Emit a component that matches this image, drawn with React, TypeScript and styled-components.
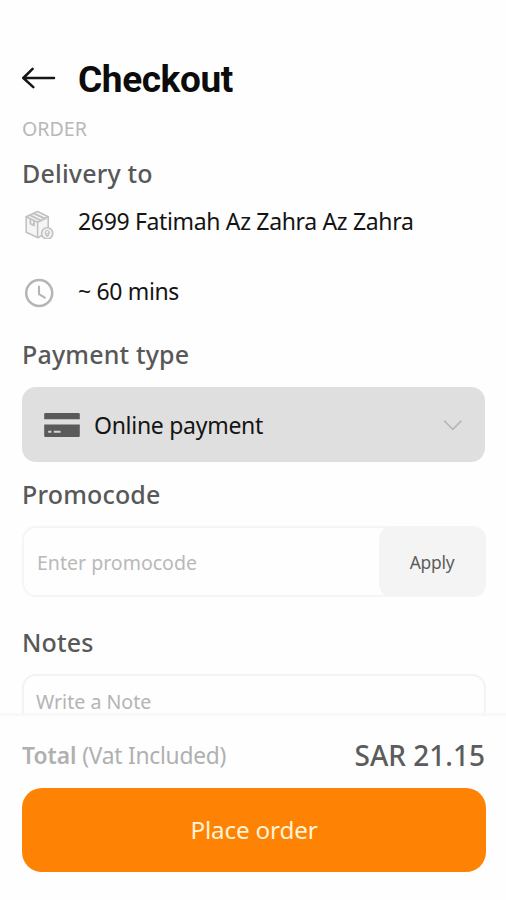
import React from 'react';
import styled, { createGlobalStyle } from 'styled-components';

const GlobalStyle = createGlobalStyle`
  * { box-sizing: border-box; }
  body {
    margin: 0;
    background: #fefefe;
    font-family: "Noto Sans", sans-serif;
  }
  button, input, textarea { font-family: inherit; margin: 0; }
`;

const Screen = styled.div`
  height: 900px;
  display: flex;
  flex-direction: column;
  overflow: hidden;
  background: #fefefe;
`;

const Content = styled.main`
  flex: 1;
  min-height: 0;
  padding: 60px 21px 0 22px;
  overflow: hidden;
`;

const Header = styled.header`
  display: flex;
  align-items: center;
  height: 40px;
`;

const BackButton = styled.button`
  display: flex;
  width: 56px;
  height: 40px;
  padding: 0;
  border: 0;
  background: none;
`;

const Title = styled.h1`
  margin: 0;
  font: 700 37px/40px Roboto, sans-serif;
  letter-spacing: -0.4px;
  color: #0c0c0c;
`;

const Overline = styled.div`
  margin-top: 14px;
  height: 30px;
  font-size: 19.6px;
  line-height: 30px;
  color: #b8b8b8;
`;

const Heading = styled.h2<{ $gap: number }>`
  margin: ${(p) => p.$gap}px 0 0;
  height: 34px;
  font-size: 25px;
  font-weight: 500;
  line-height: 34px;
  letter-spacing: 0.18px;
  color: #585858;
`;

const DetailRow = styled.div<{ $gap: number }>`
  display: grid;
  grid-template-columns: 56px 1fr;
  align-items: center;
  height: 36px;
  margin-top: ${(p) => p.$gap}px;
`;

const DetailText = styled.span`
  font-size: 23px;
  line-height: 36px;
  letter-spacing: -0.34px;
  color: #141414;
  white-space: nowrap;
`;

const PaymentSelect = styled.button`
  display: flex;
  align-items: center;
  width: 463px;
  height: 75px;
  margin-top: 16px;
  padding: 0 21px;
  border: 0;
  border-radius: 14px;
  background: #dfdfdf;
`;

const PaymentLabel = styled.span`
  flex: 1;
  margin-left: 13px;
  font-size: 23px;
  line-height: 32px;
  letter-spacing: -0.28px;
  text-align: left;
  color: #141414;
`;

const PromoField = styled.div`
  display: flex;
  width: 464px;
  height: 71px;
  margin-top: 15px;
  border: 2px solid #f5f5f5;
  border-right: 0;
  border-radius: 14px;
`;

const PromoInput = styled.input`
  flex: 1;
  min-width: 0;
  padding: 1px 0 0 13px;
  border: 0;
  outline: 0;
  background: transparent;
  font-size: 19.55px;
  color: #333;
  &::placeholder { color: #b9b9b9; opacity: 1; }
`;

const ApplyButton = styled.button`
  width: 107px;
  height: 71px;
  margin-top: -2px;
  padding: 0 1px 0 0;
  border: 0;
  border-radius: 13px;
  background: #f4f4f4;
  font-size: 17.4px;
  letter-spacing: -0.25px;
  color: #5c5c5c;
`;

const NoteInput = styled.textarea`
  display: block;
  width: 464px;
  height: 110px;
  margin-top: 15px;
  padding: 12px;
  border: 2px solid #f3f3f3;
  border-radius: 14px;
  outline: 0;
  resize: none;
  background: transparent;
  font-size: 19.6px;
  line-height: 27px;
  &::placeholder { color: #b4b4b4; opacity: 1; }
`;

const Footer = styled.footer`
  flex: none;
  height: 187px;
  padding: 24px 21px 0 22px;
  border-top: 3px solid #f8f8f8;
  background: #fefefe;
`;

const TotalRow = styled.div`
  display: flex;
  justify-content: space-between;
  height: 34px;
  margin-bottom: 14px;
`;

const TotalLabel = styled.span`
  font-size: 22.8px;
  line-height: 31px;
  letter-spacing: -0.25px;
  color: #b0b0b0;
  white-space: nowrap;
`;

const TotalWord = styled.strong`
  font-weight: 600;
  letter-spacing: 0;
`;

const TotalAmount = styled.span`
  font-size: 28px;
  font-weight: 500;
  line-height: 30px;
  color: #5c5c5c;
`;

const PlaceOrder = styled.button`
  display: block;
  width: 464px;
  height: 84px;
  padding: 0 0 2px;
  border: 0;
  border-radius: 20px;
  background: #fe8204;
  font-size: 24.3px;
  letter-spacing: -0.2px;
  color: #fff3d6;
`;

const ArrowIcon = () => (
  <svg width="34" height="40" viewBox="0 0 34 40" fill="none" stroke="#161616" strokeWidth="2.5" strokeLinecap="round" strokeLinejoin="round">
    <path d="M32 18H1.5M10.6 8.8L1.3 18l10 9.2" />
  </svg>
);

const BoxIcon = () => (
  <svg width="32" height="36" viewBox="0 0 32 36" fill="none" stroke="#c2c2c2" strokeWidth="1.6" strokeLinejoin="round" strokeLinecap="round">
    <g transform="translate(0 5.2)">
      <path fill="#f5f5f5" d="M4.2 8.6L15.6 3.3l10.6 5.3v15L16 29.6 4.2 24z" />
      <path d="M4.2 8.6L15.6 14l10.6-5.4M15.6 14v15" />
      <path d="M7.8 6.9l11.2 5.4M11.6 5.2l11.3 5.3M8.4 10.8v4.6l3.6 1.7v-4.6" strokeWidth="1.9" />
      <circle cx="25.2" cy="25.2" r="5.6" fill="#f3f3f3" />
      <circle cx="25.2" cy="24.1" r="1.8" strokeWidth="1.2" />
      <path d="M25.2 28.4c-1.4-1.4-2-2.8-1.9-4.2M25.2 28.4c1.4-1.4 2-2.8 1.9-4.2" strokeWidth="1.2" />
    </g>
  </svg>
);

const ClockIcon = () => (
  <svg width="32" height="34" viewBox="0 0 32 34" fill="none" stroke="#b5b5b5" strokeLinecap="round" strokeLinejoin="round">
    <circle cx="17.2" cy="19" r="13" strokeWidth="2.5" />
    <path d="M17 12.6v7.6l5.8 3.4" strokeWidth="2.1" />
  </svg>
);

const CardIcon = () => (
  <svg width="38" height="26" viewBox="0 0 38 26">
    <path fill="#5a5a5a" d="M2.5 1h33a1.3 1.3 0 0 1 1.3 1.3v4.9H1.2V2.3A1.3 1.3 0 0 1 2.5 1zM1.2 12.6h35.6v11.1a1.3 1.3 0 0 1-1.3 1.3h-33a1.3 1.3 0 0 1-1.3-1.3z" />
    <path stroke="#d4d4d4" strokeWidth="2" d="M5.2 19.8h3.2M10.8 19.8h6.8" />
  </svg>
);

const ChevronIcon = () => (
  <svg width="22" height="14" viewBox="0 0 22 14" fill="none" stroke="#b8b8b8" strokeWidth="1.7" strokeLinecap="round" strokeLinejoin="round">
    <path d="M2.6 3.2l8.2 8.2L19 3.2" />
  </svg>
);

export default function App() {
  return (
    <Screen>
      <GlobalStyle />
      <Content>
        <Header>
          <BackButton aria-label="Back"><ArrowIcon /></BackButton>
          <Title>Checkout</Title>
        </Header>
        <Overline>ORDER</Overline>
        <Heading $gap={12}>Delivery to</Heading>
        <DetailRow $gap={13}>
          <BoxIcon />
          <DetailText>2699 Fatimah Az Zahra Az Zahra</DetailText>
        </DetailRow>
        <DetailRow $gap={34}>
          <ClockIcon />
          <DetailText>~ 60 mins</DetailText>
        </DetailRow>
        <Heading $gap={28}>Payment type</Heading>
        <PaymentSelect>
          <CardIcon />
          <PaymentLabel>Online payment</PaymentLabel>
          <ChevronIcon />
        </PaymentSelect>
        <Heading $gap={15}>Promocode</Heading>
        <PromoField>
          <PromoInput placeholder="Enter promocode" />
          <ApplyButton>Apply</ApplyButton>
        </PromoField>
        <Heading $gap={28}>Notes</Heading>
        <NoteInput placeholder="Write a Note" />
      </Content>
      <Footer>
        <TotalRow>
          <TotalLabel><TotalWord>Total</TotalWord> (Vat Included)</TotalLabel>
          <TotalAmount>SAR 21.15</TotalAmount>
        </TotalRow>
        <PlaceOrder>Place order</PlaceOrder>
      </Footer>
    </Screen>
  );
}
